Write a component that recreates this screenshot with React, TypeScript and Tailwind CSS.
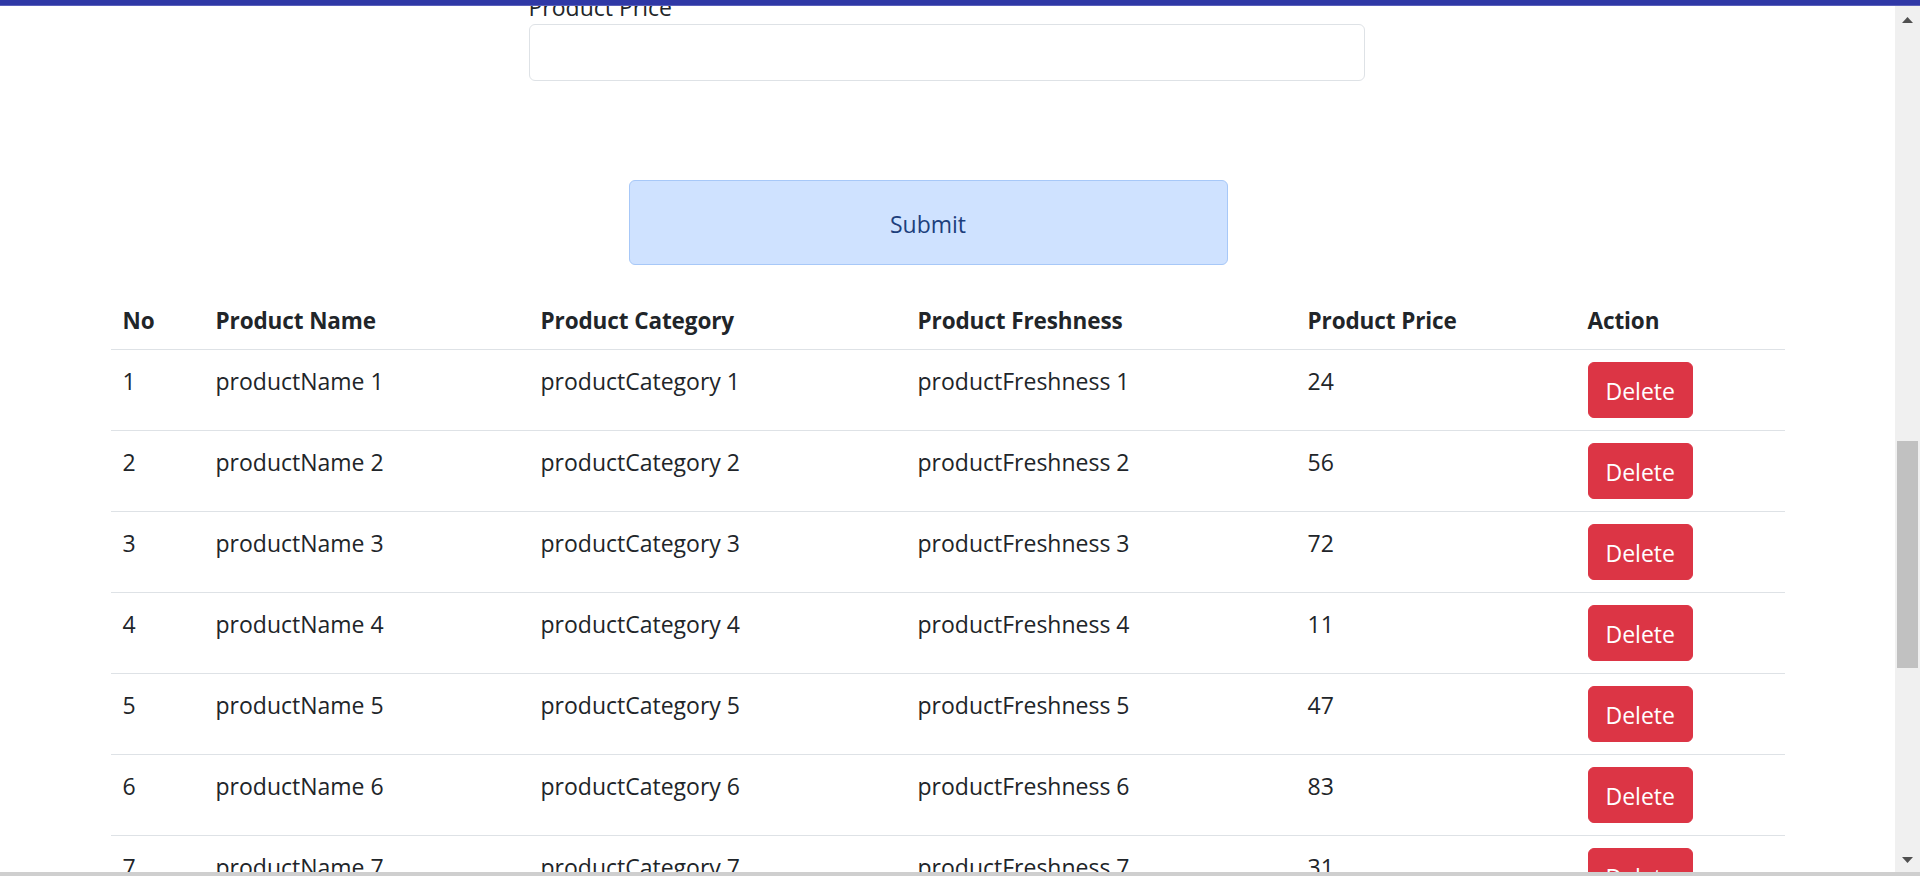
import React from "react";

const rows = [24, 56, 72, 11, 47, 83, 31, 65].map((price, i) => ({
  no: i + 1,
  name: `productName ${i + 1}`,
  category: `productCategory ${i + 1}`,
  freshness: `productFreshness ${i + 1}`,
  price,
}));

export default function App() {
  return (
    <div className="relative w-[1920px] h-[876px] overflow-hidden bg-white flex flex-col text-[#212529] font-['Open_Sans',sans-serif] text-[23px] leading-[35px]">
      {/* fixed navbar edge */}
      <div className="absolute top-0 left-0 right-0 h-[6px] bg-[#2f38a6] border-b border-[#5a60bb] z-10" />

      <div className="flex flex-1 min-h-0">
        {/* page content (scrolled) */}
        <main className="flex-1 min-w-0 overflow-hidden">
          <div className="w-[1674px] mx-auto">
            {/* form */}
            <div className="ml-[418px] w-[836px] mt-[-10px]">
              <label className="block h-[34px] text-[#212529]">Product Price</label>
              <input
                type="text"
                className="block w-full h-[57px] border border-[#dee2e6] rounded-[6px] bg-white px-[18px] outline-none"
              />
            </div>

            <div className="mt-[99px] ml-[518px] w-[599px]">
              <button className="w-full h-[85px] pt-[3px] bg-[#cfe2ff] border border-[#a7c8f8] rounded-[6px] text-[#1d3f7c]">
                Submit
              </button>
            </div>

            {/* table */}
            <table className="mt-[25px] w-full table-fixed border-collapse">
              <colgroup>
                <col className="w-[93px]" />
                <col className="w-[325px]" />
                <col className="w-[377px]" />
                <col className="w-[390px]" />
                <col className="w-[280px]" />
                <col className="w-[209px]" />
              </colgroup>
              <thead className="align-bottom">
                <tr className="border-b border-[#dee2e6]">
                  {["No", "Product Name", "Product Category", "Product Freshness", "Product Price", "Action"].map((h) => (
                    <th key={h} className="text-left font-bold px-[12px] pt-[13px] pb-[11px] text-[22.5px] tracking-[-0.1px]">
                      {h}
                    </th>
                  ))}
                </tr>
              </thead>
              <tbody className="align-top">
                {rows.map((r) => (
                  <tr key={r.no} className="border-b border-[#dee2e6]">
                    <td className="px-[12px] pt-[14px] pb-[10px]">{r.no}</td>
                    <td className="px-[12px] pt-[14px] pb-[10px]">{r.name}</td>
                    <td className="px-[12px] pt-[14px] pb-[10px]">{r.category}</td>
                    <td className="px-[12px] pt-[14px] pb-[10px]">{r.freshness}</td>
                    <td className="px-[12px] pt-[14px] pb-[10px]">{r.price}</td>
                    <td className="px-[12px] py-[12px]">
                      <button className="h-[56px] px-[17px] pt-[2px] bg-[#dc3545] border border-[#dc3545] rounded-[6px] text-white leading-[35px]">
                        Delete
                      </button>
                    </td>
                  </tr>
                ))}
              </tbody>
            </table>
          </div>
        </main>

        {/* vertical scrollbar */}
        <div className="w-[25px] bg-[#f0f0f0] flex flex-col items-center">
          <div className="h-[17px] shrink-0" />
          <svg width="11" height="6" viewBox="0 0 11 6" className="shrink-0">
            <path d="M5.5 0 L11 6 L0 6 Z" fill="#505050" />
          </svg>
          <div className="mt-[418px] w-[21px] h-[227px] bg-[#c1c1c1] shrink-0" />
          <div className="flex-1" />
          <svg width="11" height="6" viewBox="0 0 11 6" className="shrink-0">
            <path d="M0 0 L11 0 L5.5 6 Z" fill="#505050" />
          </svg>
          <div className="h-[9px] shrink-0" />
        </div>
      </div>

      {/* bottom strip */}
      <div className="h-[4px] bg-[#cfcfcf] shrink-0" />
    </div>
  );
}
